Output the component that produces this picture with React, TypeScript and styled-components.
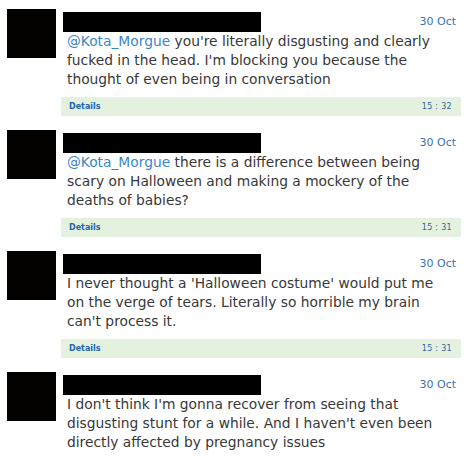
import React from "react";
import styled, { createGlobalStyle } from "styled-components";

const Global = createGlobalStyle`
  html, body { margin: 0; padding: 0; background: #ffffff; }
  body { font-family: Verdana, "DejaVu Sans", sans-serif; }
`;

const List = styled.div`
  display: flex;
  flex-direction: column;
  gap: 14px;
  padding: 9px 10px 0 7px;
`;

const Tweet = styled.div`
  display: flex;
  gap: 5px;
  align-items: flex-start;
`;

const Avatar = styled.div`
  width: 49px;
  height: 49px;
  background: #030000;
  flex: none;
`;

const Content = styled.div`
  width: 400px;
  display: flex;
  flex-direction: column;
`;

const Header = styled.div`
  display: flex;
  justify-content: space-between;
  align-items: center;
  margin-top: 3px;
  height: 20px;
  padding: 0 5px 0 2px;
`;

const NameBar = styled.div`
  width: 198px;
  height: 20px;
  background: #000;
`;

const DateText = styled.span`
  font-size: 11px;
  color: #3a72b0;
  margin-top: -2px;
`;

const Body = styled.p`
  margin: 0;
  padding: 0 9px 0 6px;
  font-size: 13.8px;
  line-height: 19px;
  color: #383838;
  min-height: 57px;
`;

const Mention = styled.span`
  color: #3a86c8;
`;

const DetailsBar = styled.div`
  margin-top: 8px;
  height: 19px;
  background: #e4f1df;
  display: flex;
  justify-content: space-between;
  align-items: center;
  padding: 0 9px 0 8px;
  font-size: 8px;
`;

const DetailsLink = styled.span`
  font-weight: bold;
  color: #2464ad;
`;

const Time = styled.span`
  color: #35649e;
  letter-spacing: 0.3px;
`;

type Item = { mention?: string; text: string; time?: string };

const items: Item[] = [
  {
    mention: "@Kota_Morgue",
    text: " you're literally disgusting and clearly fucked in the head. I'm blocking you because the thought of even being in conversation",
    time: "15 : 32",
  },
  {
    mention: "@Kota_Morgue",
    text: " there is a difference between being scary on Halloween and making a mockery of the deaths of babies?",
    time: "15 : 31",
  },
  {
    text: "I never thought a 'Halloween costume' would put me on the verge of tears. Literally so horrible my brain can't process it.",
    time: "15 : 31",
  },
  {
    text: "I don't think I'm gonna recover from seeing that disgusting stunt for a while. And I haven't even been directly affected by pregnancy issues",
  },
];

export default function App() {
  return (
    <>
      <Global />
      <List>
        {items.map((it, i) => (
          <Tweet key={i}>
            <Avatar />
            <Content>
              <Header>
                <NameBar />
                <DateText>30 Oct</DateText>
              </Header>
              <Body>
                {it.mention && <Mention>{it.mention}</Mention>}
                {it.text}
              </Body>
              {it.time && (
                <DetailsBar>
                  <DetailsLink>Details</DetailsLink>
                  <Time>{it.time}</Time>
                </DetailsBar>
              )}
            </Content>
          </Tweet>
        ))}
      </List>
    </>
  );
}
